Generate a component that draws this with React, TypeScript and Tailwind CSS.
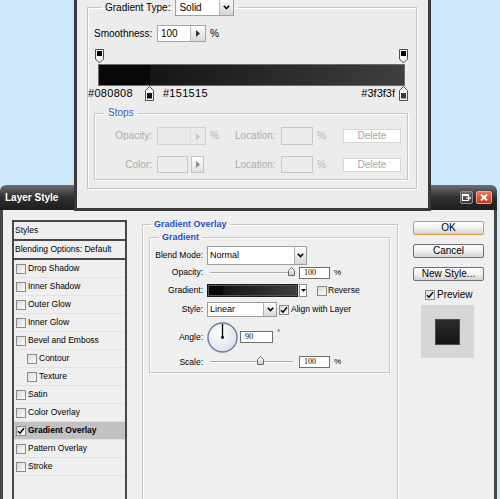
import React from 'react';

function Check({ on = false, className = '' }: { on?: boolean; className?: string }) {
  return (
    <span
      className={`inline-flex shrink-0 items-center justify-center w-[10px] h-[10px] border border-[#8a8a8a] bg-linear-to-br from-[#dadada] to-[#fbfbfb] ${className}`}
    >
      {on && (
        <svg width="8" height="8" viewBox="0 0 8 8">
          <path d="M1 4.2l2 2l4-5" fill="none" stroke="#000" strokeWidth="1.5" />
        </svg>
      )}
    </span>
  );
}

function Chevron() {
  return (
    <svg width="7" height="5" viewBox="0 0 7 5">
      <path d="M0.8 0.8l2.7 2.7l2.7-2.7" fill="none" stroke="#000" strokeWidth="1.6" />
    </svg>
  );
}

function Tri({ color = '#333' }: { color?: string }) {
  return (
    <svg width="4" height="7" viewBox="0 0 4 7">
      <path d="M0 0l4 3.5l-4 3.5z" fill={color} />
    </svg>
  );
}

function Select({ w, h, text, btn = 12 }: { w: number; h: number; text: string; btn?: number }) {
  return (
    <div className="flex border border-[#9c9c9c] bg-white" style={{ width: w, height: h }}>
      <span className="flex-1 flex items-center pl-[2px] text-[9px] leading-none">{text}</span>
      <span
        className="flex items-center justify-center border-l border-[#b0b0b0] bg-linear-to-b from-white to-[#d6d6d6]"
        style={{ width: btn }}
      >
        <Chevron />
      </span>
    </div>
  );
}

function Thumb() {
  return (
    <svg width="7" height="9" viewBox="0 0 7 9">
      <defs>
        <linearGradient id="th" x1="0" y1="0" x2="0" y2="1">
          <stop offset="0" stopColor="#ffffff" />
          <stop offset="1" stopColor="#c9c9c9" />
        </linearGradient>
      </defs>
      <path d="M0.5 3.5l3-3l3 3v5h-6z" fill="url(#th)" stroke="#6a6a6a" />
    </svg>
  );
}

function Slider({ pos }: { pos: number }) {
  return (
    <div className="relative w-[83px] h-[2px] border-t border-[#a8a8a8] bg-white">
      <span className="absolute top-[-6px]" style={{ left: pos - 3 }}>
        <Thumb />
      </span>
    </div>
  );
}

function NumBox({ w, value }: { w: number; value: string }) {
  return (
    <div
      className="h-[12px] border border-[#6e6e6e] bg-white flex items-center pl-[4px] text-[8px] leading-none font-['Liberation_Serif',serif]"
      style={{ width: w }}
    >
      {value}
    </div>
  );
}

function Row({ label, mt, h, children }: { label: string; mt: number; h: number; children: React.ReactNode }) {
  return (
    <div className="flex items-center" style={{ marginTop: mt, height: h }}>
      <span className="w-[53px] text-right text-[8.5px] leading-none">{label}</span>
      <div className="ml-[4px] flex items-center">{children}</div>
    </div>
  );
}

function Btn({ children, ok = false, className = '' }: { children: React.ReactNode; ok?: boolean; className?: string }) {
  return (
    <div
      className={`h-[14px] flex items-center justify-center rounded-[2px] text-[10px] leading-none bg-linear-to-b from-white via-[#f1f1f1] to-[#d2d2d2] ${
        ok ? 'border border-[#d6973f]' : 'border border-[#6f6f6f]'
      } ${className}`}
    >
      {children}
    </div>
  );
}

function TopStop() {
  return (
    <svg width="9" height="15" viewBox="0 0 9 15">
      <path d="M0.5 0.5h8v9.5l-4 4l-4-4z" fill="#f4f4f4" stroke="#4d4d4d" />
      <rect x="2" y="2" width="5" height="5" fill="#000" />
    </svg>
  );
}

function BottomStop({ color }: { color: string }) {
  return (
    <svg width="9" height="15" viewBox="0 0 9 15">
      <path d="M4.5 0.5l4 4v10h-8v-10z" fill="#f4f4f4" stroke="#4d4d4d" />
      <rect x="2" y="7" width="5" height="5.5" fill={color} />
    </svg>
  );
}

const listItems: { label: string; indent?: boolean; on?: boolean }[] = [
  { label: 'Drop Shadow' },
  { label: 'Inner Shadow' },
  { label: 'Outer Glow' },
  { label: 'Inner Glow' },
  { label: 'Bevel and Emboss' },
  { label: 'Contour', indent: true },
  { label: 'Texture', indent: true },
  { label: 'Satin' },
  { label: 'Color Overlay' },
  { label: 'Gradient Overlay', on: true },
  { label: 'Pattern Overlay' },
  { label: 'Stroke' },
];

function GradientEditor() {
  return (
    <div className="absolute left-[74px] top-0 z-10 w-[357px] h-[211px] bg-[#ececec] border-x-[3px] border-b-[3px] border-[#3a3a3a]">
      <fieldset className="ml-[10px] -mt-px w-[330px] h-[190px] border border-[#c3c3c3] shadow-[inset_1px_1px_0_#fff,1px_1px_0_#fff]">
        <legend className="ml-[13px] px-[4px]">
          <div className="flex items-center h-[17px]">
            <span className="text-[10px] leading-none">Gradient Type:</span>
            <div className="ml-[5px] flex w-[59px] h-[17px] border border-[#a0a0a0] bg-white">
              <span className="flex-1 flex items-center pl-[3px] text-[10px] leading-none">Solid</span>
              <span className="w-[14px] flex items-center justify-center border-l border-[#b5b5b5] bg-linear-to-b from-white to-[#d4d4d4]">
                <Chevron />
              </span>
            </div>
          </div>
        </legend>

        <div className="mt-[9px] ml-[6px] flex items-center h-[17px]">
          <span className="w-[58px] text-[10px] leading-none">Smoothness:</span>
          <div className="ml-[5px] flex w-[49px] h-[17px] border border-[#a5a5a5] bg-white">
            <span className="flex-1 flex items-center pl-[3px] text-[10px] leading-none">100</span>
            <span className="w-[15px] flex items-center justify-center border-l border-[#bdbdbd] bg-linear-to-b from-white to-[#d8d8d8]">
              <Tri />
            </span>
          </div>
          <span className="ml-[4px] text-[10px] leading-none">%</span>
        </div>

        <div className="mt-[7px] ml-[7px] w-[313px] h-[15px] flex justify-between">
          <TopStop />
          <TopStop />
        </div>
        <div className="ml-[10px] w-[307px] h-[22px] border border-[#6b6b6b] bg-[linear-gradient(to_right,#080808_0%,#080808_16.6%,#151515_16.6%,#3f3f3f_100%)]" />
        <div className="flex items-center h-[15px] pr-[8px]">
          <span className="text-[11px] leading-none tracking-[0.3px]">#080808</span>
          <span className="ml-[12px] flex">
            <BottomStop color="#111" />
          </span>
          <span className="ml-[9px] text-[11px] leading-none tracking-[0.3px]">#151515</span>
          <span className="flex-1" />
          <span className="text-[11px] leading-none">#3f3f3f</span>
          <span className="ml-[4px] flex">
            <BottomStop color="#3a3a3a" />
          </span>
        </div>

        <fieldset className="ml-[6px] mt-[6px] w-[314px] h-[73px] border border-[#c6c6c6] shadow-[inset_1px_1px_0_#fff,1px_1px_0_#fff]">
          <legend className="ml-[9px] px-[4px] text-[10px] leading-[12px] text-[#3d63c6]">Stops</legend>
          <div className="mt-[8px] flex items-center h-[18px] text-[10px] leading-none text-[#ababab]">
            <span className="w-[57px] text-right">Opacity:</span>
            <div className="w-[78px] ml-[5px] flex items-center">
              <div className="flex w-[49px] h-[18px] border border-[#d2d2d2] bg-[#eaeaea]">
                <span className="flex-1" />
                <span className="w-[15px] flex items-center justify-center border-l border-[#dcdcdc]">
                  <Tri color="#c4c4c4" />
                </span>
              </div>
              <span className="ml-[4px] text-[#b5b5b5]">%</span>
            </div>
            <span className="w-[42px]">Location:</span>
            <div className="ml-[4px] w-[32px] h-[18px] border border-[#c8c8c8] bg-[#ececec]" />
            <span className="ml-[4px] text-[#b5b5b5]">%</span>
            <div className="ml-[17px] w-[58px] h-[14px] border border-[#d6d6d6] bg-white flex items-center justify-center text-[#a5a5a5]">
              Delete
            </div>
          </div>
          <div className="mt-[11px] flex items-center h-[17px] text-[10px] leading-none text-[#ababab]">
            <span className="w-[57px] text-right">Color:</span>
            <div className="w-[78px] ml-[5px] flex items-center">
              <div className="w-[31px] h-[17px] border border-[#c8c8c8] bg-[#ececec]" />
              <div className="ml-[3px] w-[13px] h-[17px] border border-[#c4c4c4] bg-linear-to-b from-white to-[#e0e0e0] flex items-center justify-center">
                <Tri color="#8c8c8c" />
              </div>
            </div>
            <span className="w-[42px]">Location:</span>
            <div className="ml-[4px] w-[32px] h-[17px] border border-[#c8c8c8] bg-[#ececec]" />
            <span className="ml-[4px] text-[#b5b5b5]">%</span>
            <div className="ml-[17px] w-[58px] h-[14px] border border-[#d6d6d6] bg-white flex items-center justify-center text-[#a5a5a5]">
              Delete
            </div>
          </div>
        </fieldset>
      </fieldset>
    </div>
  );
}

function LayerStyle() {
  return (
    <div className="absolute left-0 top-[185px] w-[497px] h-[340px] rounded-t-[6px] overflow-hidden flex flex-col">
      {/* title bar */}
      <div className="h-[25px] shrink-0 flex items-center pl-[5px] pr-[5px] bg-linear-to-b from-[#707070] via-[#2f2f2f] to-[#1d1d1d]">
        <span className="text-[10px] font-bold text-white leading-none">Layer Style</span>
        <span className="ml-auto w-[13px] h-[13px] rounded-[2px] border border-[#8a8a8a] bg-linear-to-b from-[#6a6a6a] to-[#3a3a3a] flex items-center justify-center">
          <svg width="9" height="7" viewBox="0 0 9 7">
            <rect x="0.5" y="0.5" width="6" height="6" fill="none" stroke="#fff" />
            <rect x="0.5" y="0.5" width="6" height="1.5" fill="#fff" />
            <path d="M4 4h4.5M7 2.5l1.5 1.5l-1.5 1.5" fill="none" stroke="#fff" />
          </svg>
        </span>
        <span className="ml-[3px] w-[16px] h-[13px] rounded-[2px] border border-[#f0a090] bg-linear-to-b from-[#ef7a5e] to-[#c9321c] flex items-center justify-center">
          <svg width="8" height="7" viewBox="0 0 8 7">
            <path d="M1 0.5l6 6M7 0.5l-6 6" stroke="#fff" strokeWidth="1.8" />
          </svg>
        </span>
      </div>

      {/* body */}
      <div className="flex-1 flex items-start bg-[#efefef] border-x-[3px] border-[#464646] pl-[9px] pt-[10px]">
        {/* style list */}
        <div className="w-[115px] h-[300px] shrink-0 border-2 border-[#474747] flex flex-col text-[8.5px] leading-none">
          <div className="h-[19px] shrink-0 border-b-2 border-[#474747] flex items-center pl-[1px]">Styles</div>
          <div className="h-[19px] shrink-0 border-b-2 border-[#474747] flex items-center pl-[1px]">Blending Options: Default</div>
          {listItems.map((it) => (
            <div
              key={it.label}
              className={`h-[18px] shrink-0 flex items-center border-b border-[#e2e2e2] ${
                it.indent ? 'pl-[13px]' : 'pl-[2px]'
              } ${it.on ? 'bg-[#c2c2c2] font-bold' : ''}`}
            >
              <Check on={it.on} />
              <span className="ml-[2px]">{it.label}</span>
            </div>
          ))}
        </div>

        {/* gradient overlay settings */}
        <fieldset className="ml-[15px] -mt-px w-[256px] h-[300px] shrink-0 border border-[#c6c6c6] shadow-[inset_1px_1px_0_#fff,1px_1px_0_#fff]">
          <legend className="ml-[8px] px-[3px] text-[9px] font-bold leading-[11px] text-[#1f4fc4]">Gradient Overlay</legend>
          <fieldset className="ml-[6px] mt-[2px] w-[241px] h-[141px] border border-[#c6c6c6] shadow-[inset_1px_1px_0_#fff,1px_1px_0_#fff]">
            <legend className="ml-[9px] px-[3px] text-[9px] font-bold leading-[11px] text-[#1f4fc4]">Gradient</legend>

            <Row label="Blend Mode:" mt={3} h={19}>
              <Select w={100} h={19} text="Normal" btn={12} />
            </Row>

            <Row label="Opacity:" mt={1} h={13}>
              <span className="ml-[3px] flex">
                <Slider pos={81} />
              </span>
              <span className="ml-[6px]">
                <NumBox w={31} value="100" />
              </span>
              <span className="ml-[4px] text-[8px] leading-none">%</span>
            </Row>

            <Row label="Gradient:" mt={5} h={13}>
              <div className="w-[91px] h-[13px] border border-[#1a1a1a] p-px bg-[#555]">
                <div className="w-full h-full bg-[linear-gradient(to_right,#080808_0%,#080808_16.6%,#151515_16.6%,#3f3f3f_100%)]" />
              </div>
              <div className="ml-[1px] w-[8px] h-[13px] border border-[#8a8a8a] bg-white flex items-center justify-center">
                <svg width="5" height="3" viewBox="0 0 5 3">
                  <path d="M0 0h5l-2.5 3z" fill="#000" />
                </svg>
              </div>
              <Check className="ml-[10px]" />
              <span className="ml-[1px] text-[8.5px] leading-none">Reverse</span>
            </Row>

            <Row label="Style:" mt={5} h={15}>
              <Select w={70} h={15} text="Linear" btn={13} />
              <Check on className="ml-[2px]" />
              <span className="ml-[2px] text-[8.5px] leading-none">Align with Layer</span>
            </Row>

            <Row label="Angle:" mt={5} h={30}>
              <svg width="31" height="31" viewBox="0 0 31 31">
                <defs>
                  <radialGradient id="dial" cx="0.4" cy="0.35" r="0.7">
                    <stop offset="0" stopColor="#ffffff" />
                    <stop offset="1" stopColor="#dcdfe6" />
                  </radialGradient>
                </defs>
                <circle cx="15.5" cy="15.5" r="14.5" fill="url(#dial)" stroke="#6c7ea4" strokeWidth="1.4" />
                <line x1="15.5" y1="15.5" x2="15.5" y2="2" stroke="#000" strokeWidth="1.3" />
                <circle cx="15.5" cy="15.5" r="1.4" fill="#000" />
              </svg>
              <span className="ml-[2px]">
                <NumBox w={33} value="90" />
              </span>
              <span className="ml-[4px] self-start mt-[7px] text-[8px] leading-none">°</span>
            </Row>

            <Row label="Scale:" mt={4} h={12}>
              <span className="ml-[3px] flex">
                <Slider pos={50} />
              </span>
              <span className="ml-[6px]">
                <NumBox w={31} value="100" />
              </span>
              <span className="ml-[4px] text-[8px] leading-none">%</span>
            </Row>
          </fieldset>
        </fieldset>

        {/* buttons */}
        <div className="ml-[15px] mt-[1px] w-[71px] shrink-0 flex flex-col">
          <Btn ok>OK</Btn>
          <Btn className="mt-[9px]">Cancel</Btn>
          <Btn className="mt-[9px]">New Style...</Btn>
          <div className="mt-[9px] ml-[12px] h-[10px] flex items-center">
            <Check on />
            <span className="ml-[2px] text-[10px] leading-none">Preview</span>
          </div>
          <div className="mt-[5px] ml-[8px] w-[53px] h-[53px] bg-[#d6d6d6] flex items-center justify-center">
            <div className="w-[25px] h-[26px] border border-[#4a4a4a] bg-linear-to-b from-[#2c2c2c] to-[#151515]" />
          </div>
        </div>
      </div>
    </div>
  );
}

export default function App() {
  return (
    <div className="relative w-[500px] h-[499px] overflow-hidden bg-[#cde8fb] font-['Liberation_Sans',Arial,sans-serif] text-black">
      <LayerStyle />
      <GradientEditor />
    </div>
  );
}
